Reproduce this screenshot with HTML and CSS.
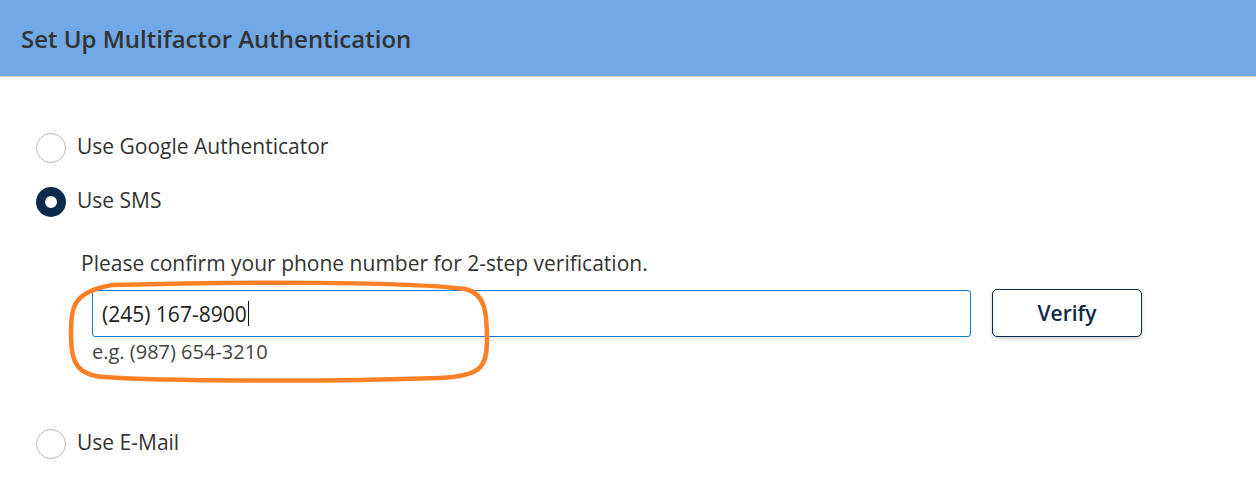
FILE: index.html
```html
<!DOCTYPE html>
<html>
<head>
<meta charset="utf-8">
<link rel="stylesheet" href="styles.css">
</head>
<body>
<header class="header">Set Up Multifactor Authentication</header>
<main class="content">
  <div class="option">
    <span class="radio"></span>
    <span class="label">Use Google Authenticator</span>
  </div>
  <div class="option option-sms">
    <span class="radio radio-checked"></span>
    <span class="label">Use SMS</span>
  </div>
  <section class="sms">
    <p class="prompt">Please confirm your phone number for 2-step verification.</p>
    <div class="field-row">
      <div class="field">
        <div class="input"><span class="value">(245) 167-8900</span><span class="caret"></span></div>
        <div class="hint">e.g. (987) 654-3210</div>
      </div>
      <button class="verify">Verify</button>
    </div>
  </section>
  <div class="option option-email">
    <span class="radio"></span>
    <span class="label">Use E-Mail</span>
  </div>
</main>
<svg class="annotation" width="1256" height="503" viewBox="0 0 1256 503">
  <path d="M 112 285 C 250 281, 410 282, 465 289 C 486 293, 487 315, 487 340 C 487 368, 480 376, 440 378 C 320 382, 160 381, 104 377 C 78 375, 71 364, 71 335 C 71 306, 73 292, 112 285 Z" fill="none" stroke="#fd7f26" stroke-width="4.5"/>
</svg>
</body>
</html>
```
FILE: styles.css
```css
html, body {
  margin: 0;
  padding: 0;
  background: #ffffff;
  font-family: "Open Sans", "Noto Sans", sans-serif;
  color: #333333;
}

body {
  position: relative;
  width: 1256px;
  height: 503px;
  overflow: hidden;
}

.header {
  height: 77px;
  box-sizing: border-box;
  background: #71a9e7;
  border-bottom: 1px solid #d4d4d4;
  display: flex;
  align-items: center;
  padding-left: 21px;
  font-size: 24px;
  font-weight: 600;
  color: #333333;
}

.content {
  padding: 56px 0 0 36px;
  display: flex;
  flex-direction: column;
}

.option {
  display: flex;
  align-items: center;
  gap: 11px;
  height: 30px;
}

.option-sms {
  margin-top: 24px;
}

.option-email {
  margin-top: 64px;
}

.radio {
  width: 30px;
  height: 30px;
  box-sizing: border-box;
  border-radius: 50%;
  border: 1px solid #b9b9b9;
  background: #ffffff;
  flex: none;
}

.radio-checked {
  border: 9px solid #0c2a4b;
}

.label {
  font-size: 21px;
  line-height: 30px;
  color: #333333;
  padding-bottom: 4px;
}

.sms {
  padding-left: 45px;
  margin-top: 32px;
}

.prompt {
  margin: 0;
  font-size: 21px;
  line-height: 28px;
  color: #333333;
}

.field-row {
  display: flex;
  align-items: flex-start;
  gap: 21px;
  margin-top: 12px;
  padding-left: 11px;
}

.field {
  width: 879px;
  padding-top: 1px;
}

.input {
  height: 47px;
  box-sizing: border-box;
  border: 1px solid #1479d0;
  border-radius: 3px;
  padding-left: 9px;
  display: flex;
  align-items: center;
  font-size: 21px;
  color: #222222;
}

.caret {
  width: 1px;
  height: 25px;
  background: #111111;
  margin-left: 1px;
}

.hint {
  margin-top: 2px;
  font-size: 20px;
  line-height: 26px;
  color: #444444;
}

.verify {
  width: 150px;
  height: 48px;
  box-sizing: border-box;
  border: 1px solid #0e2a4b;
  border-radius: 5px;
  background: #ffffff;
  box-shadow: 0 2px 4px rgba(0, 0, 0, 0.2);
  font-family: "Open Sans", "Noto Sans", sans-serif;
  font-size: 21px;
  font-weight: 600;
  color: #0e2a4b;
  padding: 0;
}

.annotation {
  position: absolute;
  left: 0;
  top: 0;
  pointer-events: none;
}
```
